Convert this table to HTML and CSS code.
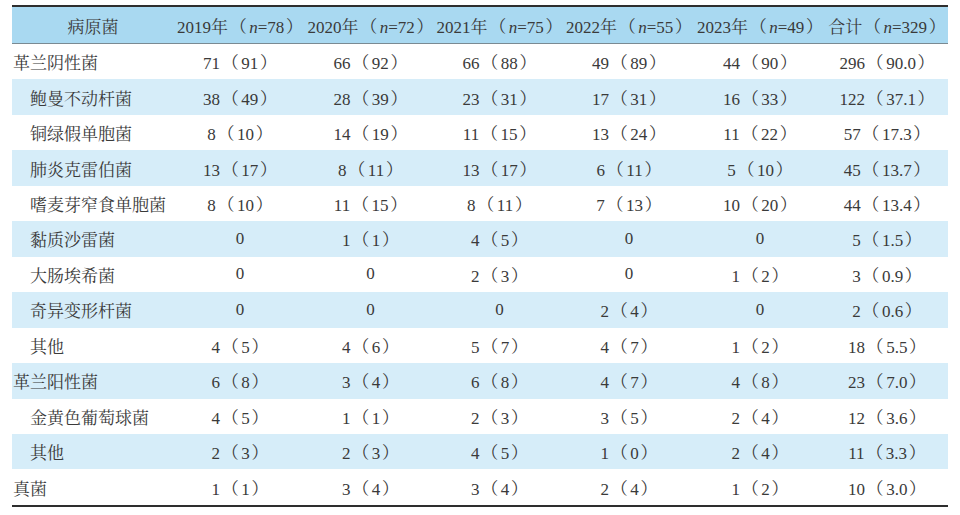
FILE: index.html
```html
<!DOCTYPE html>
<html lang="zh">
<head>
<meta charset="utf-8">
<link rel="stylesheet" href="styles.css">
</head>
<body>
<table class="tbl">
  <colgroup>
    <col class="c-name"><col class="c-19"><col class="c-20"><col class="c-21"><col class="c-22"><col class="c-23"><col class="c-tot">
  </colgroup>
  <thead>
    <tr>
      <th class="name-h">病原菌</th>
      <th>2019年<span class="lp">（</span><i>n</i>=78<span class="rp">）</span></th>
      <th>2020年<span class="lp">（</span><i>n</i>=72<span class="rp">）</span></th>
      <th>2021年<span class="lp">（</span><i>n</i>=75<span class="rp">）</span></th>
      <th>2022年<span class="lp">（</span><i>n</i>=55<span class="rp">）</span></th>
      <th>2023年<span class="lp">（</span><i>n</i>=49<span class="rp">）</span></th>
      <th>合计<span class="lp">（</span><i>n</i>=329<span class="rp">）</span></th>
    </tr>
  </thead>
  <tbody>
    <tr><td class="name">革兰阴性菌</td><td>71<span class="lp">（</span>91<span class="rp">）</span></td><td>66<span class="lp">（</span>92<span class="rp">）</span></td><td>66<span class="lp">（</span>88<span class="rp">）</span></td><td>49<span class="lp">（</span>89<span class="rp">）</span></td><td>44<span class="lp">（</span>90<span class="rp">）</span></td><td>296<span class="lp">（</span>90.0<span class="rp">）</span></td></tr>
    <tr><td class="name sub">鲍曼不动杆菌</td><td>38<span class="lp">（</span>49<span class="rp">）</span></td><td>28<span class="lp">（</span>39<span class="rp">）</span></td><td>23<span class="lp">（</span>31<span class="rp">）</span></td><td>17<span class="lp">（</span>31<span class="rp">）</span></td><td>16<span class="lp">（</span>33<span class="rp">）</span></td><td>122<span class="lp">（</span>37.1<span class="rp">）</span></td></tr>
    <tr><td class="name sub">铜绿假单胞菌</td><td>8<span class="lp">（</span>10<span class="rp">）</span></td><td>14<span class="lp">（</span>19<span class="rp">）</span></td><td>11<span class="lp">（</span>15<span class="rp">）</span></td><td>13<span class="lp">（</span>24<span class="rp">）</span></td><td>11<span class="lp">（</span>22<span class="rp">）</span></td><td>57<span class="lp">（</span>17.3<span class="rp">）</span></td></tr>
    <tr><td class="name sub">肺炎克雷伯菌</td><td>13<span class="lp">（</span>17<span class="rp">）</span></td><td>8<span class="lp">（</span>11<span class="rp">）</span></td><td>13<span class="lp">（</span>17<span class="rp">）</span></td><td>6<span class="lp">（</span>11<span class="rp">）</span></td><td>5<span class="lp">（</span>10<span class="rp">）</span></td><td>45<span class="lp">（</span>13.7<span class="rp">）</span></td></tr>
    <tr><td class="name sub">嗜麦芽窄食单胞菌</td><td>8<span class="lp">（</span>10<span class="rp">）</span></td><td>11<span class="lp">（</span>15<span class="rp">）</span></td><td>8<span class="lp">（</span>11<span class="rp">）</span></td><td>7<span class="lp">（</span>13<span class="rp">）</span></td><td>10<span class="lp">（</span>20<span class="rp">）</span></td><td>44<span class="lp">（</span>13.4<span class="rp">）</span></td></tr>
    <tr><td class="name sub">黏质沙雷菌</td><td>0</td><td>1<span class="lp">（</span>1<span class="rp">）</span></td><td>4<span class="lp">（</span>5<span class="rp">）</span></td><td>0</td><td>0</td><td>5<span class="lp">（</span>1.5<span class="rp">）</span></td></tr>
    <tr><td class="name sub">大肠埃希菌</td><td>0</td><td>0</td><td>2<span class="lp">（</span>3<span class="rp">）</span></td><td>0</td><td>1<span class="lp">（</span>2<span class="rp">）</span></td><td>3<span class="lp">（</span>0.9<span class="rp">）</span></td></tr>
    <tr><td class="name sub">奇异变形杆菌</td><td>0</td><td>0</td><td>0</td><td>2<span class="lp">（</span>4<span class="rp">）</span></td><td>0</td><td>2<span class="lp">（</span>0.6<span class="rp">）</span></td></tr>
    <tr><td class="name sub">其他</td><td>4<span class="lp">（</span>5<span class="rp">）</span></td><td>4<span class="lp">（</span>6<span class="rp">）</span></td><td>5<span class="lp">（</span>7<span class="rp">）</span></td><td>4<span class="lp">（</span>7<span class="rp">）</span></td><td>1<span class="lp">（</span>2<span class="rp">）</span></td><td>18<span class="lp">（</span>5.5<span class="rp">）</span></td></tr>
    <tr><td class="name">革兰阳性菌</td><td>6<span class="lp">（</span>8<span class="rp">）</span></td><td>3<span class="lp">（</span>4<span class="rp">）</span></td><td>6<span class="lp">（</span>8<span class="rp">）</span></td><td>4<span class="lp">（</span>7<span class="rp">）</span></td><td>4<span class="lp">（</span>8<span class="rp">）</span></td><td>23<span class="lp">（</span>7.0<span class="rp">）</span></td></tr>
    <tr><td class="name sub">金黄色葡萄球菌</td><td>4<span class="lp">（</span>5<span class="rp">）</span></td><td>1<span class="lp">（</span>1<span class="rp">）</span></td><td>2<span class="lp">（</span>3<span class="rp">）</span></td><td>3<span class="lp">（</span>5<span class="rp">）</span></td><td>2<span class="lp">（</span>4<span class="rp">）</span></td><td>12<span class="lp">（</span>3.6<span class="rp">）</span></td></tr>
    <tr><td class="name sub">其他</td><td>2<span class="lp">（</span>3<span class="rp">）</span></td><td>2<span class="lp">（</span>3<span class="rp">）</span></td><td>4<span class="lp">（</span>5<span class="rp">）</span></td><td>1<span class="lp">（</span>0<span class="rp">）</span></td><td>2<span class="lp">（</span>4<span class="rp">）</span></td><td>11<span class="lp">（</span>3.3<span class="rp">）</span></td></tr>
    <tr><td class="name">真菌</td><td>1<span class="lp">（</span>1<span class="rp">）</span></td><td>3<span class="lp">（</span>4<span class="rp">）</span></td><td>3<span class="lp">（</span>4<span class="rp">）</span></td><td>2<span class="lp">（</span>4<span class="rp">）</span></td><td>1<span class="lp">（</span>2<span class="rp">）</span></td><td>10<span class="lp">（</span>3.0<span class="rp">）</span></td></tr>
  </tbody>
</table>
</body>
</html>
```

FILE: styles.css
```css
html, body {
  margin: 0;
  padding: 0;
  background: #ffffff;
}

body {
  padding: 5px 0 0 12px;
}

.tbl {
  width: 936px;
  border-collapse: collapse;
  table-layout: fixed;
  font-family: "Liberation Serif", "Noto Serif CJK SC", "Noto Sans CJK SC", serif;
  font-size: 17px;
  color: #3a3a3a;
  border-top: 2px solid #2e2e2e;
  border-bottom: 2px solid #2e2e2e;
}

.c-name { width: 162px; }
.c-19 { width: 132px; }
.c-20 { width: 129px; }
.c-21 { width: 129px; }
.c-22 { width: 130px; }
.c-23 { width: 132px; }
.c-tot { width: 122px; }

.tbl th {
  height: 36px;
  padding: 0;
  font-weight: normal;
  text-align: center;
  vertical-align: middle;
  background: #a9d9f1;
  border-bottom: 1px solid #7a8a92;
  white-space: nowrap;
}

.tbl td {
  height: 35.46px;
  padding: 0;
  text-align: center;
  vertical-align: middle;
  white-space: nowrap;
}

.tbl i {
  font-style: italic;
}

/* a little air around the brackets, as in the printed table */
.lp {
  margin-left: 0.1em;
  margin-right: 0.15em;
}

.rp {
  margin-left: 0.1em;
}

.tbl td.name {
  text-align: left;
  padding-left: 1px;
}

.tbl td.sub {
  padding-left: 18px;
}

.tbl tbody tr:nth-child(even) td {
  background: #d6edf9;
}
```
